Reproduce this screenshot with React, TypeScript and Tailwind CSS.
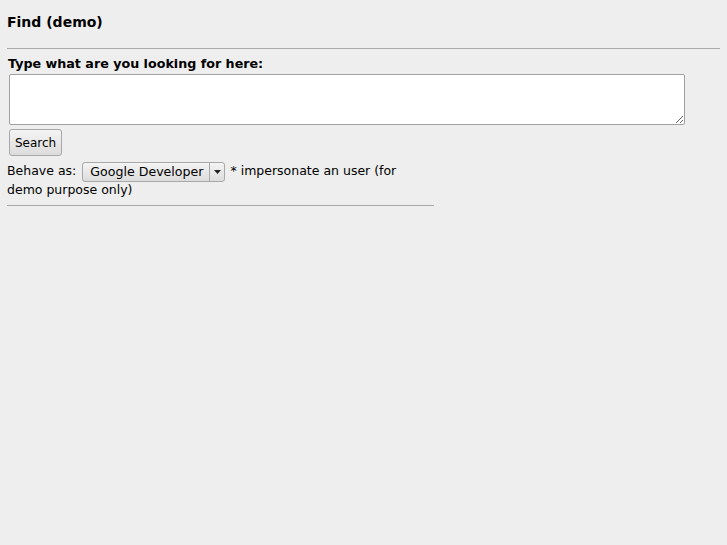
import React from "react";

export default function App() {
  return (
    <div className="min-h-[545px] w-full bg-[#eeeeee] text-black" style={{ fontFamily: '"DejaVu Sans", sans-serif' }}>
      <div className="px-[7px] pt-[14px]">
        <h1 className="text-[14px] font-bold leading-[16px] pb-[18px] border-b border-[#a8a8a8] w-[713px]">Find (demo)</h1>
        <div className="pt-[7px]">
          <label className="block text-[12.7px] font-bold leading-[15px] pl-[1px]">Type what are you looking for here:</label>
          <textarea className="block mt-[3px] ml-[2px] w-[676px] h-[51px] bg-white border border-[#a0a0a0] rounded-[2px] resize-y"></textarea>
          <button className="block mt-[4px] ml-[2px] h-[27px] px-[5px] text-[12px] leading-[14px] bg-gradient-to-b from-[#f4f4f4] to-[#dcdcdc] border border-[#a8a8a8] rounded-[3px]">Search</button>
          <div className="w-[427px] mt-[5px] text-[12.5px] leading-[19px] pb-[6px] border-b border-[#a8a8a8]">
            Behave as:{" "}
            <span className="inline-flex align-middle items-stretch h-[20px] -my-[2px] ml-[2px] mr-[1px] border border-[#a8a8a8] rounded-[3px] bg-gradient-to-b from-[#f4f4f4] to-[#dcdcdc] text-[12.6px]">
              <span className="pl-[7px] pr-[6px] leading-[18px]">Google Developer</span>
              <span className="w-[15px] border-l border-[#a8a8a8] flex items-center justify-center">
                <svg width="7" height="4" viewBox="0 0 7 4"><path d="M0 0h7L3.5 4z" fill="#222" /></svg>
              </span>
            </span>{" "}
            * impersonate an user (for demo purpose only)
          </div>
        </div>
      </div>
    </div>
  );
}
